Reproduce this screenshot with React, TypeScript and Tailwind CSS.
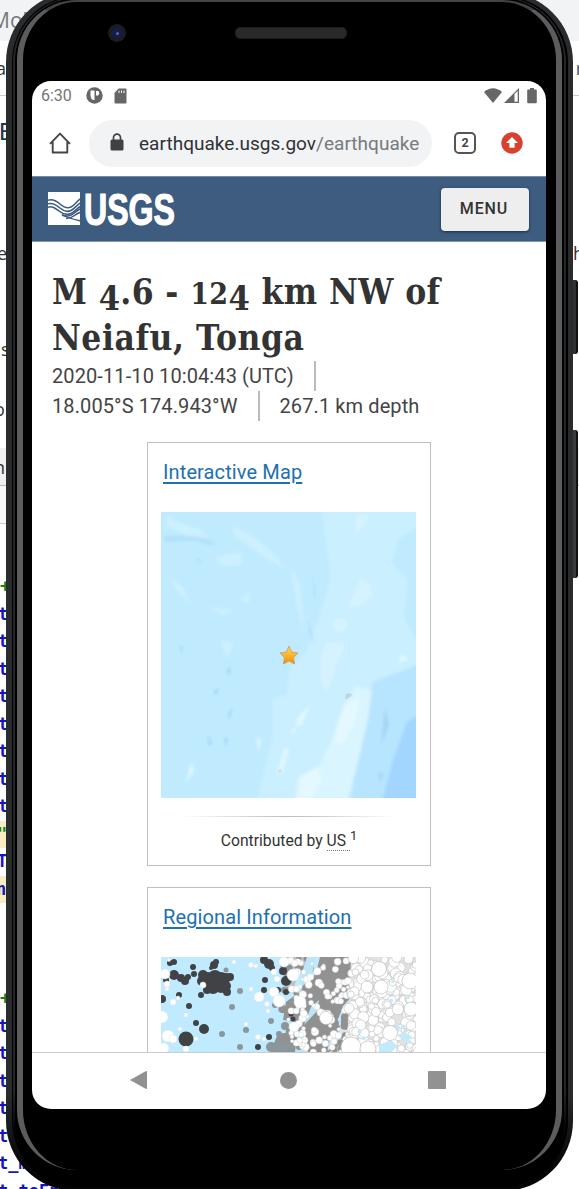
import type { ReactNode } from "react";

type Dot = { x: number; y: number; r: number };

function makeRandom(seed: number) {
  let s = seed;
  return () => {
    s = (s * 1664525 + 1013904223) % 4294967296;
    return s / 4294967296;
  };
}

const rand = makeRandom(42);

function scatter(count: number, x0: number, x1: number, rMin: number, rMax: number): Dot[] {
  return Array.from({ length: count }, () => ({
    x: x0 + rand() * (x1 - x0),
    y: rand() * 97,
    r: rMin + rand() * (rMax - rMin),
  }));
}

const greyDots = scatter(75, 120, 185, 2, 4.5);
const midWhite = scatter(115, 127, 192, 1.5, 3.8);
const farWhite = scatter(230, 186, 257, 3, 5.8);
const blueFlecks = scatter(12, 190, 256, 1, 2.6);

const darkDots: number[][] = [
  [9, 6, 3], [13, 5, 3], [13, 18, 5], [20, 21, 4], [24, 24, 4], [27, 20, 3], [32, 10, 3], [33, 17, 3],
  [42, 18, 5], [41, 24, 5], [47, 22, 7], [54, 20, 7], [60, 22, 7], [65, 21, 5], [69, 20, 4], [52, 30, 7],
  [60, 30, 6], [65, 29, 5], [66, 35, 4], [46, 33, 4], [53, 8, 4], [55, 5, 3], [50, 11, 2], [40, 38, 3],
  [18, 38, 3], [28, 49, 3], [5, 23, 3], [1, 42, 4], [35, 66, 3], [43, 72, 5], [25, 82, 7.5],
  [103, 3, 4], [108, 7, 5], [111, 11, 3], [104, 23, 3], [103, 33, 3], [117, 33, 3], [125, 35, 3],
  [122, 14, 4], [125, 24, 5], [130, 57, 2.5], [132, 62, 2.5], [108, 80, 3], [97, 90, 3],
];

const greySpots: number[][] = [
  [79, 34, 3], [71, 50, 3], [65, 13, 2.5], [61, 77, 3], [85, 73, 3], [79, 90, 3], [110, 64, 3], [114, 48, 3],
  [138, 90, 3], [110, 90, 5], [117, 90, 6], [125, 91, 7], [118, 77, 3], [124, 69, 4],
];

const whiteSpots: number[][] = [
  [4, 17, 5], [6, 27, 3], [6, 32, 2], [42, 28, 3], [12, 45, 3], [17, 41, 2], [25, 58, 2], [1, 60, 6],
  [7, 79, 6], [12, 82, 4], [3, 91, 5], [19, 72, 2], [35, 82, 2], [25, 92, 3], [90, 8, 2.5], [95, 9, 2],
  [73, 5, 2], [90, 32, 2], [98, 40, 5], [113, 35, 5], [118, 44, 6], [106, 47, 2.5], [85, 67, 2],
  [107, 54, 2], [97, 80, 2.5], [103, 82, 2], [123, 5, 5], [132, 18, 6], [139, 45, 6], [133, 70, 5],
  [113, 15, 3], [116, 22, 3], [8, 3, 1.5],
];

const bigWhite: number[][] = [
  [218, 12, 7.5], [220, 30, 7], [229, 76, 7.5], [190, 90, 10], [207, 92, 8], [249, 24, 8], [165, 61, 6.5], [206, 30, 6], [250, 52, 7],
];

function RegionalMap() {
  return (
    <svg viewBox="0 0 255 95" className="block h-[95px] w-[255px]">
      <defs>
        <filter id="dotSoft" x="0" y="0" width="1" height="1">
          <feGaussianBlur stdDeviation=".45" />
        </filter>
      </defs>
      <rect width="255" height="95" fill="#bfeaff" />
      <g filter="url(#dotSoft)">
        <rect width="255" height="95" fill="#bfeaff" />
        <path d="M120 0h30l-4 12-8 3-5 15-7 6-3-10z" fill="#b9c3c8" />
        <path d="M159 0h31l12 15-3 15-16 18-13 30-4 17h-24l-6-30-14-2 3-18 20-15 10-14z" fill="#929292" />
        <path d="M123 43h32v18l-17 4-8 10-13 2-8 18h57l-8-20 9-14-4-18z" fill="#919191" />
        <path d="M190 0h65v95h-72l-7-14 12-30z" fill="#e2e2e2" />
        {greyDots.map((d, i) => (
          <circle key={i} cx={d.x} cy={d.y} r={d.r} fill="#919191" />
        ))}
        <path d="M139 31l11-9 5-22h-9l-5 16z M150 50l8-7-2 11-13 14z M136 80l8-5 3 20h-13z" fill="#bce5f7" />
        {greySpots.map(([x, y, r], i) => (
          <circle key={i} cx={x} cy={y} r={r} fill="#8b969a" />
        ))}
        {darkDots.map(([x, y, r], i) => (
          <circle key={i} cx={x} cy={y} r={r} fill="#404345" />
        ))}
        {midWhite.map((d, i) => (
          <circle key={i} cx={d.x} cy={d.y} r={d.r} fill="#fff" stroke="#d5d5d5" strokeWidth=".5" />
        ))}
        {whiteSpots.map(([x, y, r], i) => (
          <circle key={i} cx={x} cy={y} r={r} fill="#fff" stroke="#dde6ea" strokeWidth=".5" />
        ))}
        {farWhite.map((d, i) => (
          <circle key={i} cx={d.x} cy={d.y} r={d.r} fill="#fff" stroke="#c4c4c4" strokeWidth=".7" />
        ))}
        {blueFlecks.map((d, i) => (
          <circle key={i} cx={d.x} cy={d.y} r={d.r} fill="#c5e9f8" />
        ))}
        <path d="M218 88l12-5 6 6-5 6h-13z M236 78l8-3 7 5-6 6z" fill="#c3eafb" />
        {bigWhite.map(([x, y, r], i) => (
          <circle key={i} cx={x} cy={y} r={r} fill="#fff" stroke="#bebebe" strokeWidth=".7" />
        ))}
      </g>
    </svg>
  );
}

function InteractiveMap() {
  return (
    <svg viewBox="0 0 255 286" className="block h-[286px] w-[255px]">
      <defs>
        <linearGradient id="star" x1="0" y1="0" x2="0" y2="1">
          <stop offset="0" stopColor="#ffd75e" />
          <stop offset=".5" stopColor="#fdb52c" />
          <stop offset="1" stopColor="#f28a10" />
        </linearGradient>
        <filter id="soft">
          <feGaussianBlur stdDeviation="1.8" />
        </filter>
      </defs>
      <rect width="255" height="286" fill="#c0ebff" />
      <g filter="url(#soft)">
        <path d="M160 -5H262V292H95L112 225V188L126 182L129 155L146 140L150 125L157 110L170 65Z" fill="#caefff" />
        <path d="M258 15l-21 12-6 25 15 15-3 40 15 25z" fill="#c0eafe" />
        <path d="M262 150l-24 10-27 10-3 30-8 30-12 64h74z" fill="#b7e4ff" />
        <path d="M262 200l-16 10-14 38-12 46h42z" fill="#a3d6ff" />
        <path d="M194 174l17 4-4 30-9 38-12 46h-52l2-26 22-12 12-24 8-25z" fill="#d9f5ff" />
        <path d="M183 192l16-6-6 28-12 18-8-3 5-20z M140 264l17-9 4 12-10 19h-15z" fill="#e4f8ff" />
        <path d="M199 66l10 5 3 13-12 10-14 2 6-12z M165 130l20 2-8 18-10 30-8-10 1-25z M195 3l14-1-6 12-10 10z" fill="#d4f2ff" />
        <circle cx="179" cy="113" r="7" fill="#d5f3ff" />
        <path d="M5 2l12 8 22 8 9 8-22-2-20-10z M72 14l22 12 20 17 10 14-22-13-28-20z M130 55l9 18 4 48-7-28z M8 65l13 10 9 16-12-10z M55 45l24-5 2 12-20 2z M49 95l23 4-10 4z M60 128l12 3-6 15z M79 88l10-7-2 10z" fill="#cdf0fe" />
        <path d="M2 24q28-2 44 3l10 5-8 1-14-4-30 1z M35 46l6 1-3 5z M151 55l4 27-2 7z M147 105l7 28-6-10z" fill="#b3e1fa" />
        <path d="M66 155l4 2-3 8z M52 180l7-5-4 8z M67 202l5-7-4 14z M48 222l3 10-4 2z M63 225l4 2-2 8z M224 195l4 18-8 20z M218 260l5 2-5 9z M19 134l3 2-2 5z" fill="#a4d5f6" />
        <path d="M137 205l12-12-8 20-6 2z M130 218l6-2-4 7z M123 236l5 1-6 22-6 4z M96 225l4 2-3 14z M30 250l3 9-8 12z M240 142l8 5-10 4z" fill="#dff7fe" />
      </g>
      <path d="M184 183.500q2-3 5-2l3 1-4 3-3 2z" fill="#bccdd5" opacity=".8" />
      <circle cx="119" cy="259" r="2" fill="#d0e2e8" />
      <path d="M128 134.2l2.800 5.900 6.200.9-4.500 4.600 1.100 6.400-5.600-3-5.600 3 1.100-6.400-4.500-4.600 6.200-.9z" fill="url(#star)" stroke="#c49a55" strokeWidth=".8" strokeLinejoin="round" />
    </svg>
  );
}

function UsgsLogo() {
  return (
    <svg viewBox="0 0 128 36" className="h-9 w-32">
      <path d="M0 1h32v33H0z" fill="#fff" />
      <g fill="none" stroke="#3d5c80" strokeWidth="1.500">
        <path d="M-1 9.500c5-2 9 0 13 3.500s7 5 11 3 5-5.500 10-8.500" />
        <path d="M-1 13c5-2 9 .5 13 4s7 4.500 11 2.500 5-5 10-8" />
        <path d="M-1 16.500c5-2 8 .5 12 3.500s8 4.500 12 2.500 5-4.500 10-7.500" />
        <path d="M14 24c5 2 8 1.500 11-1s4-3.500 8-5.500" />
        <path d="M18 27.500c4 0 6-1 8.500-3s4-2.500 6.500-3.500" />
        <path d="M14 23.500c5 3.500 10 4.500 19 6.500" />
      </g>
      <text x="36" y="34" textLength="91" lengthAdjust="spacingAndGlyphs" fill="#fff" stroke="#fff" strokeWidth="1.200" fontFamily="Liberation Sans Narrow, Liberation Sans, sans-serif" fontWeight="700" fontSize="45">USGS</text>
    </svg>
  );
}

function StatusBar() {
  return (
    <div className="flex h-[30px] items-center pr-[9px] pb-px pl-[9px] text-[#757575]">
      <span className="w-[45px] text-[16px] leading-none">6:30</span>
      <svg viewBox="0 0 17 17" className="size-[17px]">
        <circle cx="8.500" cy="8.500" r="8.200" fill="#666" />
        <path d="M4.500 3.500h4v9.500c-2.500.3-4-2-4-4.500zM10 4h2.500c1 2 1 4-.5 4.500h-2z" fill="#fff" />
      </svg>
      <svg viewBox="0 0 13 16" className="ml-[11px] h-4 w-[13px]">
        <path d="M4.500.5h7q1 0 1 1v13q0 1-1 1h-10q-1 0-1-1V5z" fill="#666" />
        <path d="M5 2.500v2.500M7.500 2.500v2.500M10 2.500v2.500" stroke="#fff" strokeWidth="1" />
      </svg>
      <svg viewBox="0 0 18 15" className="ml-auto h-[15px] w-[18px]">
        <path d="M0 4Q9-3.500 18 4L9 15z" fill="#666" />
      </svg>
      <svg viewBox="0 0 15 15" className="ml-[2px] size-[15px]">
        <path d="M0 15L15 0v15z" fill="#666" />
        <path d="M10.500 6L13.700 3v10.700h-3.200z" fill="#fff" />
      </svg>
      <svg viewBox="0 0 10 16" className="ml-[8px] h-4 w-[10px]">
        <path d="M3 0h4v1.500h2q.8 0 .8.800v12q0 .9-.8.900H1q-.8 0-.8-.9V2.300q0-.8.800-.8h2z" fill="#666" />
      </svg>
    </div>
  );
}

function Toolbar() {
  return (
    <div className="flex h-[65px] items-center pr-[23px] pb-px pl-[17px]">
      <svg viewBox="0 0 22 22" className="mr-[18px] size-[22px]" fill="none" stroke="#454545" strokeWidth="1.900">
        <path d="M1 11.800L11 1.600l10 10.200M3.700 10v10.500h14.600V10" strokeLinejoin="round" />
      </svg>
      <div className="flex h-[47px] w-[343px] shrink-0 items-center rounded-full bg-[#f1f3f4] pl-[21px]">
        <svg viewBox="0 0 14 18" className="mr-[15px] h-[18px] w-[14px] shrink-0 -translate-y-px">
          <path d="M3.500 7V4.700a3.500 3.500 0 0 1 7 0V7" fill="none" stroke="#3f4245" strokeWidth="1.700" />
          <rect x=".5" y="6.500" width="13" height="11" rx="1.500" fill="#3f4245" />
        </svg>
        <span className="mt-[2px] text-[19px] tracking-[0.030px] whitespace-nowrap text-[#303236]">
          earthquake.usgs.gov<span className="text-[#777a7e]">/earthquake</span>
        </span>
      </div>
      <span className="ml-[22px] flex size-[22px] shrink-0 items-center justify-center rounded-[5px] border-2 border-[#555] text-[12.5px] leading-none font-bold text-[#444]">2</span>
      <svg viewBox="0 0 22 22" className="ml-auto size-[22px]">
        <circle cx="11" cy="11" r="10.700" fill="#d8402f" />
        <path d="M11 5l6 6h-3.400v4.800H8.400V11H5z" fill="#fff" />
      </svg>
    </div>
  );
}

function LowFigure({ children, small }: { children: ReactNode; small?: boolean }) {
  return small ? (
    <span className="text-[30px]">{children}</span>
  ) : (
    <span className="relative top-[6px] text-[34px]">{children}</span>
  );
}

function Card({ title, children }: { title: string; children: ReactNode }) {
  return (
    <section className="w-[284px] border-[1.500px] border-[#bfbfbf] px-[13px] pt-4">
      <h2 className="ml-[2px] h-[53px] text-[20px] leading-[27px] tracking-[0.120px] text-[#1c71b0]">
        <a className="underline decoration-[1.500px] underline-offset-[3px]">{title}</a>
      </h2>
      {children}
    </section>
  );
}

function Screen() {
  return (
    <div className="flex h-[1028px] w-[514px] flex-col overflow-hidden rounded-[19px] bg-white font-['Roboto',sans-serif]">
      <StatusBar />
      <Toolbar />
      <header className="flex h-[66px] shrink-0 items-center justify-between border-t border-b border-t-[#7288a3] border-b-[#8399b2] bg-[#3d5c80] pr-[17px] pl-4">
        <UsgsLogo />
        <button className="h-[43px] w-[88px] rounded-[4px] bg-[#eee] pr-[2px] text-[16px] font-medium tracking-[0.9px] text-[#333] shadow-[0_1px_3px_#1c2d42]">MENU</button>
      </header>
      <main className="min-h-0 flex-1 overflow-hidden px-5 pt-[27px] text-[#333]">
        <h1 className="h-[92px] font-['DejaVu_Serif',serif] text-[35px] leading-[46px] font-bold whitespace-nowrap [font-stretch:condensed]">
          <span className="block h-[46px] w-fit tracking-[0.400px]">M <LowFigure>4</LowFigure>.6 - <LowFigure small>12</LowFigure><LowFigure>4</LowFigure> km NW of</span>
          <span className="block h-[46px] w-fit tracking-[0.550px]">Neiafu, Tonga</span>
        </h1>
        <div className="text-[20px] leading-[30px] tracking-[0.100px] whitespace-nowrap text-[#444]">
          <div className="flex"><span>2020-11-10 10:04:43 (UTC)</span><span className="ml-5 border-l-2 border-[#bbb]" /></div>
          <div className="flex"><span>18.005°S 174.943°W</span><span className="ml-5 border-l-2 border-[#bbb] pl-5">267.1 km depth</span></div>
        </div>
        <div className="mt-[21px] ml-[95px] flex flex-col gap-[21px]">
          <Card title="Interactive Map">
            <InteractiveMap />
            <div className="mx-5 mt-[18px] h-px bg-gradient-to-r from-white via-[#bbb] to-white" />
            <p className="flex h-[48px] items-center justify-center text-[15.700px] leading-none whitespace-pre">
              <span>Contributed by <abbr className="border-b border-dotted border-[#777] no-underline">US </abbr><sup className="text-[13px]">1</sup></span>
            </p>
          </Card>
          <Card title="Regional Information">
            <RegionalMap />
            <div className="h-12" />
          </Card>
        </div>
      </main>
      <nav className="flex h-[57px] shrink-0 items-center justify-between border-t border-[#ccc] pr-[100px] pb-[2px] pl-[98px]">
        <svg viewBox="0 0 17 20" className="h-5 w-[17px]"><path d="M0 10L16 1q1-.3 1 1v16q0 1.300-1 1z" fill="#929292" /></svg>
        <span className="ml-px size-[17px] rounded-full bg-[#929292]" />
        <span className="size-[18px] rounded-[1px] bg-[#929292]" />
      </nav>
    </div>
  );
}

function CodeLine({ children, marked, green }: { children?: ReactNode; marked?: boolean; green?: boolean }) {
  return (
    <div className={`flex h-[27.5px] w-20 items-center font-['DejaVu_Sans_Mono',monospace] text-[17px] font-bold whitespace-pre ${marked ? "bg-[#f8ecc0]" : ""} ${green ? "text-[#188018]" : "text-[#1515c0]"}`}>
      {children}
    </div>
  );
}

function Backdrop() {
  return (
    <div className="flex flex-col font-['Open_Sans',sans-serif] text-[18px] leading-none text-[#333]">
      <div className="flex h-[41px] items-center bg-[#f1f3f4] text-[21px] text-[#777]"><span className="-ml-[9px]">Mol</span></div>
      <div className="flex h-[55px] items-center justify-between border-b border-[#ccc]"><span className="-ml-[4px]">a</span><span className="-mr-[4px] text-[#456]">r</span></div>
      <div className="flex h-[72px] items-center font-['Roboto',sans-serif] text-[24px] text-[#20364f]"><span className="-ml-[1px]">E</span></div>
      <div className="mt-[37px] flex h-[96px] items-center justify-between"><span className="-ml-[3px]">e</span><span className="-mr-[5px]">h</span></div>
      <div className="flex h-[96px] items-center"><span className="ml-px">s</span></div>
      <div className="flex h-[24px] items-center"><span className="-ml-[6px]">o</span></div>
      <div className="mt-[27px] flex h-[38px] items-center border-b border-[#bbb] bg-[#f0f0f0]"><span className="-ml-[6px]">n</span></div>
      <div className="h-[38px] w-5 border-b border-[#ccc] bg-[#f8f8f8]" />
      <div className="h-[49px]" />
      <CodeLine green>+</CodeLine>
      {Array.from({ length: 8 }, (_, i) => (
        <CodeLine key={i}><span className="-ml-[2px]">t</span></CodeLine>
      ))}
      <CodeLine marked green><span className="-ml-[3px]">"</span></CodeLine>
      <CodeLine><span className="-ml-[3px]">T</span></CodeLine>
      <CodeLine marked><span className="-ml-[4px]">n</span></CodeLine>
      <div className="h-[82px]" />
      <CodeLine green>+</CodeLine>
      {["t", "t", "t", "t", "t,", "t_m", "t_toEn"].map((t, i) => (
        <CodeLine key={i}><span className="-ml-[2px]">{t}</span></CodeLine>
      ))}
    </div>
  );
}

function Phone() {
  return (
    <div className="h-[1199px] w-[567px] rounded-[70px] bg-gradient-to-b from-[#292b2d] from-92% to-[#050505] to-98% pt-[4px] pr-[5px] pb-[4px] pl-[6px]">
      <div className="h-full rounded-[66px] bg-black pt-px pr-[2px] pb-px pl-px">
        <div className="h-full rounded-[65px] bg-gradient-to-b from-[#242628] from-92% to-black to-98% pt-px pr-[2px] pb-px pl-[2px]">
          <div className="h-full rounded-[63px] bg-black pt-[2px] pr-[2px] pl-[2px]">
            <div className="h-[1170px] rounded-[60px] border-x-[6px] border-t-2 border-x-[#5c5c5e] border-t-[#434343] bg-black pl-[9px]">
              <div className="flex h-[79px] items-start">
                <span className="mt-[22px] ml-[76px] flex size-[18px] items-center justify-center rounded-full bg-[#1c1d22]">
                  <span className="flex size-[10px] items-center justify-center rounded-full bg-[#151d4e]"><span className="size-[3px] rounded-full bg-[#5266a8]" /></span>
                </span>
                <span className="mt-[25px] ml-[109px] h-[12px] w-[112px] rounded-[5px] border border-[#1c1c1c] bg-[#292929]" />
              </div>
              <Screen />
            </div>
          </div>
        </div>
      </div>
    </div>
  );
}

export default function App() {
  return (
    <div className="relative h-[1189px] w-[579px] overflow-hidden bg-white">
      <Backdrop />
      <div className="absolute top-[280px] left-[568px] h-[74px] w-[10px] rounded-r-[3px] border-r-2 border-[#111] bg-[#303133]" />
      <div className="absolute top-[430px] left-[568px] h-[148px] w-[10px] rounded-r-[3px] border-r-2 border-[#111] bg-[#3a3b3d]" />
      <div className="absolute -top-[8px] left-[6px]">
        <Phone />
      </div>
    </div>
  );
}
